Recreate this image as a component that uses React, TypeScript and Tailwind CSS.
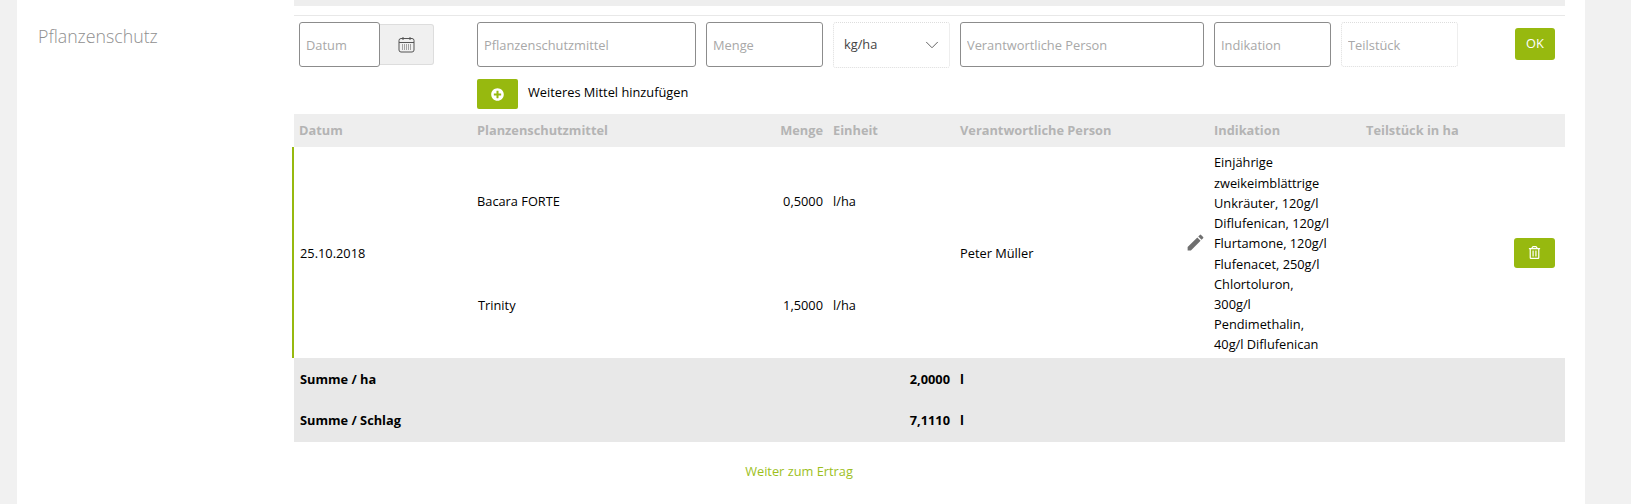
import React from "react";
import { FaPlusCircle, FaRegTrashAlt } from "react-icons/fa";
import { MdEdit } from "react-icons/md";
import { ChevronDown } from "lucide-react";

const cols = "grid grid-cols-[183px_229px_127px_127px_254px_152px_148px_1fr]";
const inputCls =
  "h-[45px] rounded-[3px] border border-[#8c8c8c] bg-white px-[6px] text-[12.85px] outline-none placeholder:text-[#a8a8a8]";

const indikation = [
  "Einjährige",
  "zweikeimblättrige",
  "Unkräuter, 120g/l",
  "Diflufenican, 120g/l",
  "Flurtamone, 120g/l",
  "Flufenacet, 250g/l",
  "Chlortoluron,",
  "300g/l",
  "Pendimethalin,",
  "40g/l Diflufenican",
];

function CalendarIcon() {
  return (
    <svg width="17" height="17" viewBox="0 0 17 17" fill="none" stroke="#555555" strokeWidth="1">
      <rect x="1" y="2.5" width="15" height="13.5" rx="2" />
      <path d="M1 6.5h15M5 1v3M12 1v3" />
      <path d="M4 9h9M4 11h9M4 13h9" strokeDasharray="1 1" />
    </svg>
  );
}

export default function App() {
  return (
    <div className="flex h-[504px] w-[1631px] overflow-hidden bg-white font-['Open_Sans',sans-serif] text-[12.8px] text-black">
      <div className="w-[17px] shrink-0 bg-[#f1f1f1]" />
      <div className="w-[277px] shrink-0 pl-[21px] pt-[22px]">
        <h2 className="text-[17.75px] font-light leading-[28px] text-[#8f8f8f]">Pflanzenschutz</h2>
      </div>
      <main className="w-[1271px] shrink-0">
        <div className="h-[6px] bg-[#eeeeee]" />
        <div className="mt-[9px] h-px bg-[#e8e8e8]" />
        <div className="flex items-start pl-[5px] pt-[6px]">
          <div className="flex w-[178px] shrink-0 items-center">
            <input placeholder="Datum" className={`${inputCls} w-[81px]`} />
            <div className="flex h-[41px] w-[54px] items-center justify-center rounded-r-[3px] border border-l-0 border-[#dddddd] bg-[#f0f0f0]">
              <CalendarIcon />
            </div>
          </div>
          <div className="flex gap-[10px]">
            <input placeholder="Pflanzenschutzmittel" className={`${inputCls} w-[219px]`} />
            <input placeholder="Menge" className={`${inputCls} w-[117px]`} />
            <div className="flex h-[46px] w-[117px] items-center justify-between rounded-[3px] border border-dotted border-[#dddddd] pl-[10px] pr-[6px] text-[#444444]">
              <span>kg/ha</span>
              <ChevronDown size={22} strokeWidth={1} className="text-[#555555]" />
            </div>
            <input placeholder="Verantwortliche Person" className={`${inputCls} w-[244px]`} />
            <input placeholder="Indikation" className={`${inputCls} w-[117px]`} />
            <input
              placeholder="Teilstück"
              className={`${inputCls} w-[117px] border-dotted !border-[#dddddd]`}
            />
          </div>
          <button className="ml-[57px] mt-[6px] h-[32px] w-[40px] rounded-[3px] bg-[#97b90f] text-white">OK</button>
        </div>
        <div className="ml-[183px] mt-[11px] flex items-center gap-[10px]">
          <button className="flex h-[30px] w-[41px] items-center justify-center rounded-[2px] bg-[#97b90f] text-white">
            <FaPlusCircle className="text-[13px]" />
          </button>
          <span className="mb-[2px]">Weiteres Mittel hinzufügen</span>
        </div>

        <div className={`${cols} mt-[5px] h-[33px] items-center bg-[#eeeeee] font-bold text-[#b4b4b4]`}>
          <div className="pl-[5px]">Datum</div>
          <div>Planzenschutzmittel</div>
          <div className="pr-[10px] text-right">Menge</div>
          <div>Einheit</div>
          <div>Verantwortliche Person</div>
          <div>Indikation</div>
          <div className="col-span-2">Teilstück in ha</div>
        </div>

        <div className={`${cols} relative h-[211px] grid-rows-2 items-center pt-[2px]`}>
          <div className="absolute bottom-0 left-[-2px] top-0 w-[2px] bg-[#97b90f]" />
          <div className="row-span-2 pl-[6px]">25.10.2018</div>
          <div>Bacara FORTE</div>
          <div className="pr-[10px] text-right">0,5000</div>
          <div>l/ha</div>
          <div className="relative row-span-2 flex h-full items-center">
            Peter Müller
            <MdEdit className="absolute right-[8px] top-[83px] text-[21px] text-[#6f6f6f]" />
          </div>
          <div className="col-start-6 row-span-2 row-start-1 whitespace-nowrap leading-[20.2px]">
            {indikation.map((line) => (
              <div key={line}>{line}</div>
            ))}
          </div>
          <div className="col-start-8 row-span-2 row-start-1 flex justify-start">
            <button className="flex h-[30px] w-[41px] -translate-y-px items-center justify-center rounded-[3px] bg-[#97b90f] text-white">
              <FaRegTrashAlt className="text-[13px]" />
            </button>
          </div>
          <div className="col-start-2 row-start-2 pl-px">Trinity</div>
          <div className="col-start-3 row-start-2 pr-[10px] text-right">1,5000</div>
          <div className="col-start-4 row-start-2">l/ha</div>
        </div>

        <div className="bg-[#e8e8e8] pt-px font-bold">
          <div className={`${cols} h-[41px] items-center`}>
            <div className="col-span-2 pl-[6px]">Summe / ha</div>
            <div className="col-span-2 pr-[10px] text-right">2,0000</div>
            <div>l</div>
          </div>
          <div className={`${cols} h-[42px] items-center`}>
            <div className="col-span-2 pl-[6px]">Summe / Schlag</div>
            <div className="col-span-2 pr-[10px] text-right">7,1110</div>
            <div>l</div>
          </div>
        </div>

        <div className="mt-[20px] w-[1010px] text-center text-[#9dbf1d]">
          <a>Weiter zum Ertrag</a>
        </div>
      </main>
      <div className="ml-[20px] w-[46px] shrink-0 bg-[#f1f1f1]" />
    </div>
  );
}
